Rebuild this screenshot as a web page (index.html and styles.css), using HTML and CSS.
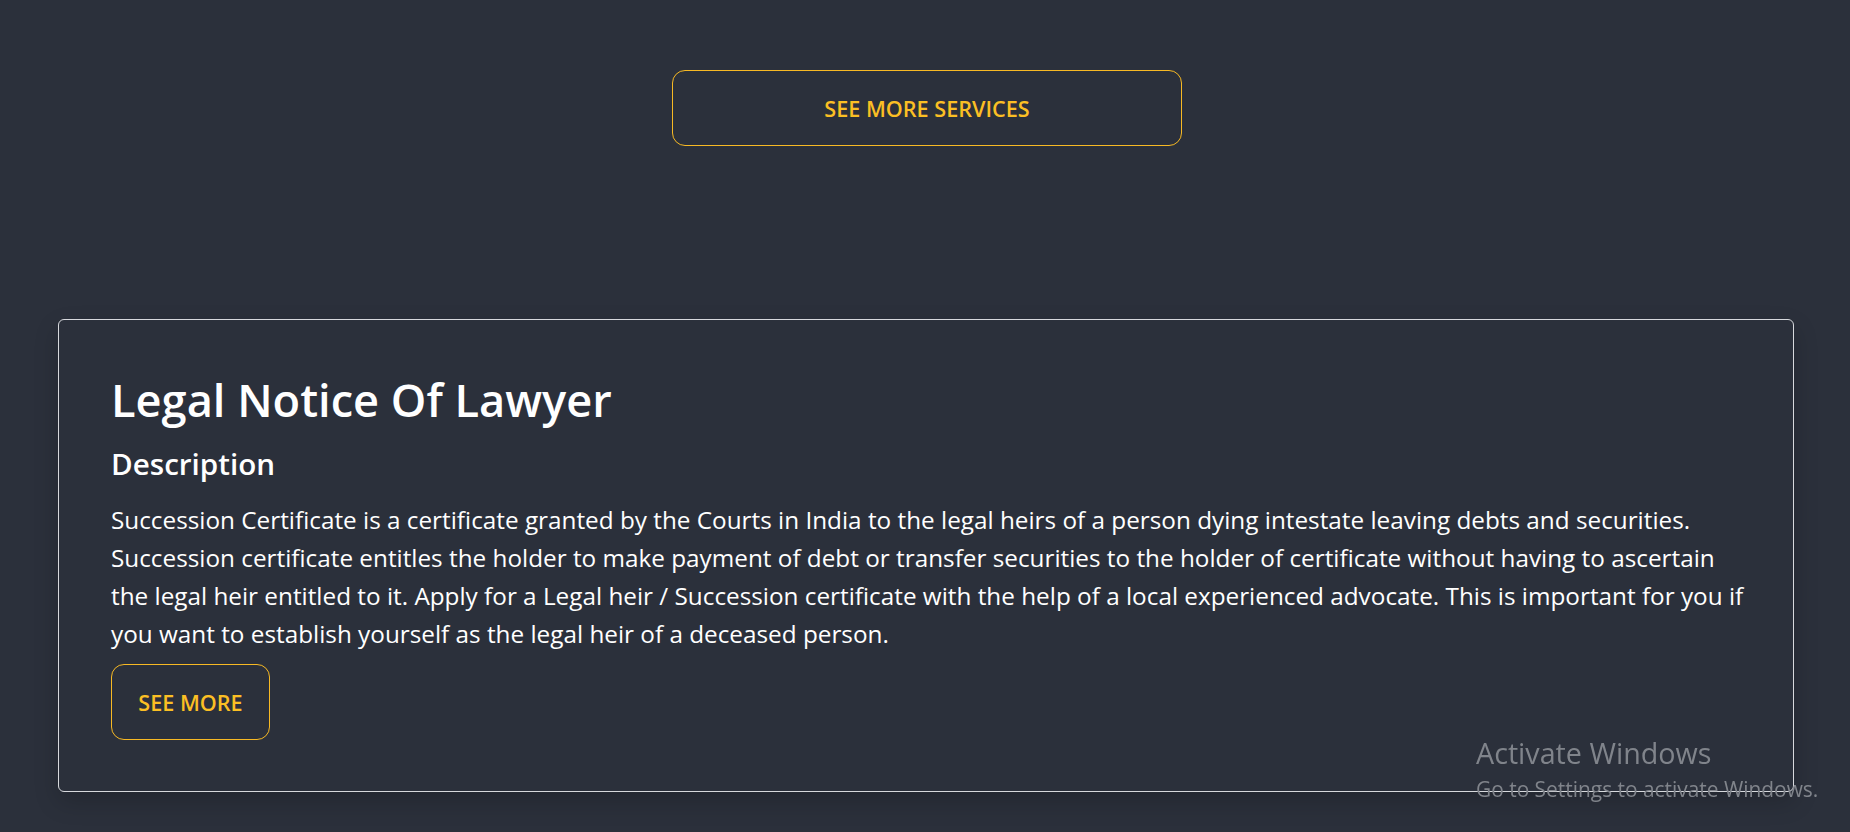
FILE: index.html
```html
<!DOCTYPE html>
<html lang="en">
<head>
<meta charset="utf-8">
<title>Legal Notice Of Lawyer</title>
<link rel="stylesheet" href="styles.css">
</head>
<body>
  <section class="more-services">
    <a class="btn-outline btn-wide" href="#">See more services</a>
  </section>

  <section class="service-card">
    <h1 class="service-title">Legal Notice Of Lawyer</h1>
    <h2 class="service-subtitle">Description</h2>
    <p class="service-text">Succession Certificate is a certificate granted by the Courts in India to the legal heirs of a person dying intestate leaving debts and securities. Succession certificate entitles the holder to make payment of debt or transfer securities to the holder of certificate without having to ascertain the legal heir entitled to it. Apply for a Legal heir / Succession certificate with the help of a local experienced advocate. This is important for you if you want to establish yourself as the legal heir of a deceased person.</p>
    <a class="btn-outline btn-small" href="#">See more</a>
  </section>

  <div class="activate">
    <div class="activate-title">Activate Windows</div>
    <div class="activate-sub">Go to Settings to activate Windows.</div>
  </div>
</body>
</html>
```

FILE: styles.css
```css
html, body {
  margin: 0;
  padding: 0;
}

body {
  background: #2b303b;
  color: #ffffff;
  font-family: "Open Sans", "Noto Sans", sans-serif;
  min-height: 832px;
  overflow: hidden;
}

.more-services {
  display: flex;
  justify-content: center;
  padding: 70px 0 0 4px;
}

.btn-outline {
  display: flex;
  align-items: center;
  justify-content: center;
  box-sizing: border-box;
  height: 76px;
  border: 1px solid #f7b924;
  border-radius: 13px;
  color: #fbbf24;
  font-weight: 600;
  font-size: 21.6px;
  text-transform: uppercase;
  text-decoration: none;
}

.btn-wide {
  width: 510px;
}

.btn-small {
  width: 159px;
}

.service-card {
  margin: 173px 56px 0 58px;
  border: 1px solid #d7d9dd;
  border-radius: 6px;
  padding: 50px 45px 51px 52px;
  box-shadow: 0 10px 24px rgba(0, 0, 0, 0.18);
}

.service-title {
  margin: 0;
  font-size: 45.2px;
  line-height: 60px;
  font-weight: 600;
}

.service-subtitle {
  margin: 16px 0 0;
  font-size: 29.6px;
  line-height: 36px;
  font-weight: 600;
}

.service-text {
  margin: 19px 0 11px;
  font-size: 24.3px;
  line-height: 38px;
  font-weight: 400;
}

.activate {
  position: fixed;
  left: 1476px;
  top: 735px;
  color: #80848b;
  pointer-events: none;
}

.activate-title {
  font-size: 28.7px;
  line-height: 36px;
}

.activate-sub {
  margin-top: 3px;
  font-size: 20.9px;
  line-height: 30px;
}
```
